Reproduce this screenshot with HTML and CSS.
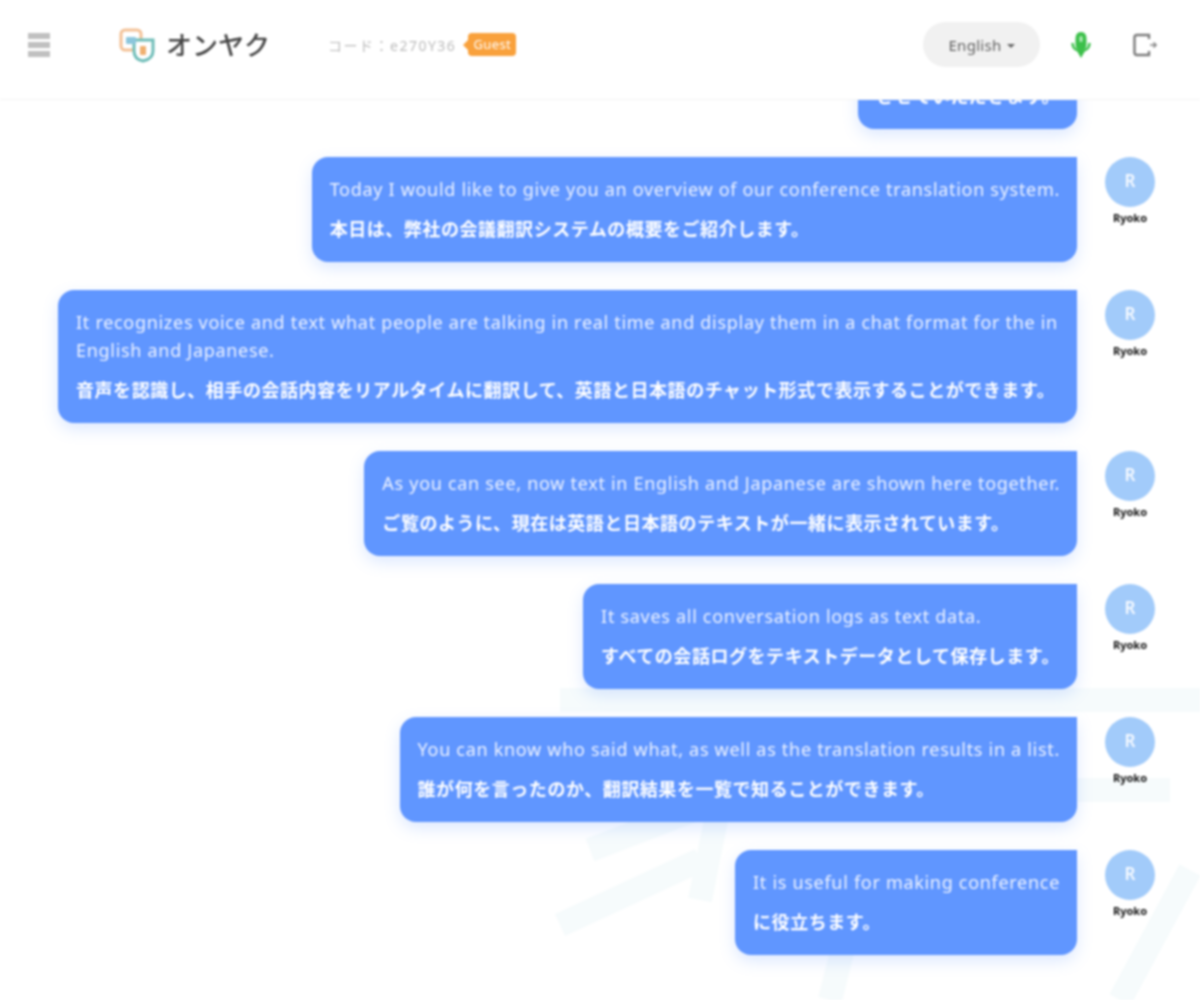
FILE: index.html
```html
<!DOCTYPE html>
<html lang="ja">
<head>
<meta charset="utf-8">
<title>オンヤク</title>
<link rel="stylesheet" href="styles.css">
</head>
<body>
<div class="page">
  <svg class="watermark" viewBox="0 0 1200 1000" aria-hidden="true">
    <g fill="none" stroke="#f6fbfc" stroke-width="24">
      <path d="M560 700H1200"/>
      <path d="M590 850L720 800L700 900"/>
      <path d="M560 925L700 860"/>
      <path d="M830 1000L860 880"/>
      <path d="M1000 790H1170"/>
      <path d="M1120 1000L1190 870"/>
      <path d="M660 590L700 700"/>
    </g>
  </svg>
  <header class="topbar">
    <div class="menu-icon"><span></span><span></span><span></span></div>
    <div class="brand">
      <svg class="logo" viewBox="0 0 38 36" aria-hidden="true">
        <rect x="2" y="3" width="20" height="20" rx="4" fill="#fff" stroke="#f3c196" stroke-width="3"/>
        <path d="M15 13H34V24C34 30 29 33 24 34C19 33 15 30 15 24Z" fill="#fff" stroke="#6fbdb8" stroke-width="3"/>
        <rect x="7" y="10" width="10" height="7" rx="1" fill="#8cc6dc"/>
        <rect x="21" y="19" width="6" height="9" rx="1" fill="#f0b070"/>
      </svg>
      <span class="brand-name">オンヤク</span>
    </div>
    <span class="code">コード：e270Y36</span>
    <span class="badge">Guest</span>
    <div class="actions">
      <div class="lang">English <i class="caret"></i></div>
      <svg class="mic" viewBox="0 0 20 28" aria-hidden="true">
        <path d="M10 1C14 1 15.500 4 15.500 8V13C15.500 17 14 19 10 19C6 19 4.500 17 4.500 13V8C4.500 4 6 1 10 1Z" fill="#3cc04a"/>
        <path d="M1.500 12C1.500 17 5 20 10 20C15 20 18.500 17 18.500 12" fill="none" stroke="#3cc04a" stroke-width="2.500"/>
        <path d="M6 20H14L10 27Z" fill="#3cc04a"/>
        <rect x="8.500" y="5" width="3" height="6" rx="1.500" fill="#b5ecbc"/>
      </svg>
      <svg class="logout" viewBox="0 0 24 24" aria-hidden="true">
        <path d="M16 6V2H4C2.500 2 1.500 3 1.500 4.500V19.500C1.500 21 2.500 22 4 22H16V18" fill="none" stroke="#7b7b7b" stroke-width="2.400"/>
        <path d="M17 12H23M20.500 9.500L23 12L20.500 14.500" fill="none" stroke="#8a8a8a" stroke-width="1.600"/>
      </svg>
    </div>
  </header>
  <main class="chat">
    <div class="row">
      <div class="bubble">
        <p class="en">Thank you all.</p>
        <p class="ja">させていただきます。</p>
      </div>
      <div class="person"><div class="avatar">R</div><div class="name">Ryoko</div></div>
    </div>
    <div class="row">
      <div class="bubble">
        <p class="en">Today I would like to give you an overview of our conference translation system.</p>
        <p class="ja">本日は、弊社の会議翻訳システムの概要をご紹介します。</p>
      </div>
      <div class="person"><div class="avatar">R</div><div class="name">Ryoko</div></div>
    </div>
    <div class="row">
      <div class="bubble">
        <p class="en">It recognizes voice and text what people are talking in real time and display them in a chat format for the in English and Japanese.</p>
        <p class="ja">音声を認識し、相手の会話内容をリアルタイムに翻訳して、英語と日本語のチャット形式で表示することができます。</p>
      </div>
      <div class="person"><div class="avatar">R</div><div class="name">Ryoko</div></div>
    </div>
    <div class="row">
      <div class="bubble">
        <p class="en">As you can see, now text in English and Japanese are shown here together.</p>
        <p class="ja">ご覧のように、現在は英語と日本語のテキストが一緒に表示されています。</p>
      </div>
      <div class="person"><div class="avatar">R</div><div class="name">Ryoko</div></div>
    </div>
    <div class="row">
      <div class="bubble">
        <p class="en">It saves all conversation logs as text data.</p>
        <p class="ja">すべての会話ログをテキストデータとして保存します。</p>
      </div>
      <div class="person"><div class="avatar">R</div><div class="name">Ryoko</div></div>
    </div>
    <div class="row">
      <div class="bubble">
        <p class="en">You can know who said what, as well as the translation results in a list.</p>
        <p class="ja">誰が何を言ったのか、翻訳結果を一覧で知ることができます。</p>
      </div>
      <div class="person"><div class="avatar">R</div><div class="name">Ryoko</div></div>
    </div>
    <div class="row">
      <div class="bubble">
        <p class="en">It is useful for making conference</p>
        <p class="ja">に役立ちます。</p>
      </div>
      <div class="person"><div class="avatar">R</div><div class="name">Ryoko</div></div>
    </div>
  </main>
</div>
</body>
</html>
```
FILE: styles.css
```css
* { box-sizing: border-box; }
html, body { margin: 0; height: 100%; overflow: hidden; background: #fff; }
body { font-family: "Noto Sans", "Noto Sans CJK JP", sans-serif; }
.page { position: relative; height: 1000px; display: flex; flex-direction: column; filter: blur(0.8px); background: #fff; }
.watermark { position: absolute; left: 0; top: 0; width: 1200px; height: 1000px; }
.topbar { position: relative; z-index: 2; flex: none; height: 100px; display: flex; align-items: center; padding: 0 43px 10px 28px; background: #fff; border-bottom: 1px solid #f4f4f4; }
.menu-icon { width: 22px; display: flex; flex-direction: column; gap: 3px; }
.menu-icon span { height: 6px; background: #c0c0c0; }
.brand { display: flex; align-items: center; gap: 9px; margin-left: 69px; }
.logo { width: 38px; height: 36px; }
.brand-name { font-size: 26px; color: #444; font-weight: 500; line-height: 1; }
.code { margin-left: 58px; font-size: 14px; letter-spacing: 1.500px; color: #bbb; }
.badge { position: relative; margin-left: 12px; padding: 0 5px; height: 23px; line-height: 23px; font-size: 13px; letter-spacing: .4px; color: #fff; background: #f9a13c; border-radius: 4px; }
.badge::before { content: ""; position: absolute; left: -5px; top: 7px; border: 5px solid transparent; border-left: 0; border-right-color: #f9a13c; }
.actions { margin-left: auto; display: flex; align-items: center; }
.lang { width: 117px; height: 45px; border-radius: 23px; background: #f1f1f1; color: #5f5f5f; font-size: 15px; letter-spacing: .3px; display: flex; align-items: center; justify-content: center; gap: 5px; }
.caret { border: 4px solid transparent; border-bottom: 0; border-top-color: #666; margin-top: 2px; }
.mic { width: 20px; height: 28px; margin-left: 31px; }
.logout { width: 24px; height: 24px; margin-left: 42px; }
.chat { position: relative; z-index: 1; flex: 1; min-height: 0; overflow: hidden; display: flex; flex-direction: column; justify-content: flex-end; gap: 28px; padding: 0 45px 45px 58px; }
.row { flex: none; display: flex; justify-content: flex-end; align-items: flex-start; gap: 28px; }
.bubble { flex: 0 1 auto; min-width: 0; padding: 18px 17px 19px 18px; background: #6096ff; border-radius: 16px 0 16px 16px; box-shadow: 0 6px 16px rgba(96, 150, 255, .22); color: #fff; }
.en { margin: 0; font-size: 18px; line-height: 28px; letter-spacing: .7px; color: #eef3ff; }
.ja { margin: 12px 0 0; font-size: 18px; line-height: 28px; font-weight: 700; letter-spacing: .55px; }
.person { flex: none; width: 50px; display: flex; flex-direction: column; align-items: center; }
.avatar { width: 50px; height: 50px; padding-bottom: 3px; border-radius: 50%; background: #a2cbfa; color: #f6faff; font-size: 17px; font-weight: 600; display: flex; align-items: center; justify-content: center; }
.name { margin-top: 4px; font-size: 11px; line-height: 14px; color: #111; font-weight: 700; }
```
